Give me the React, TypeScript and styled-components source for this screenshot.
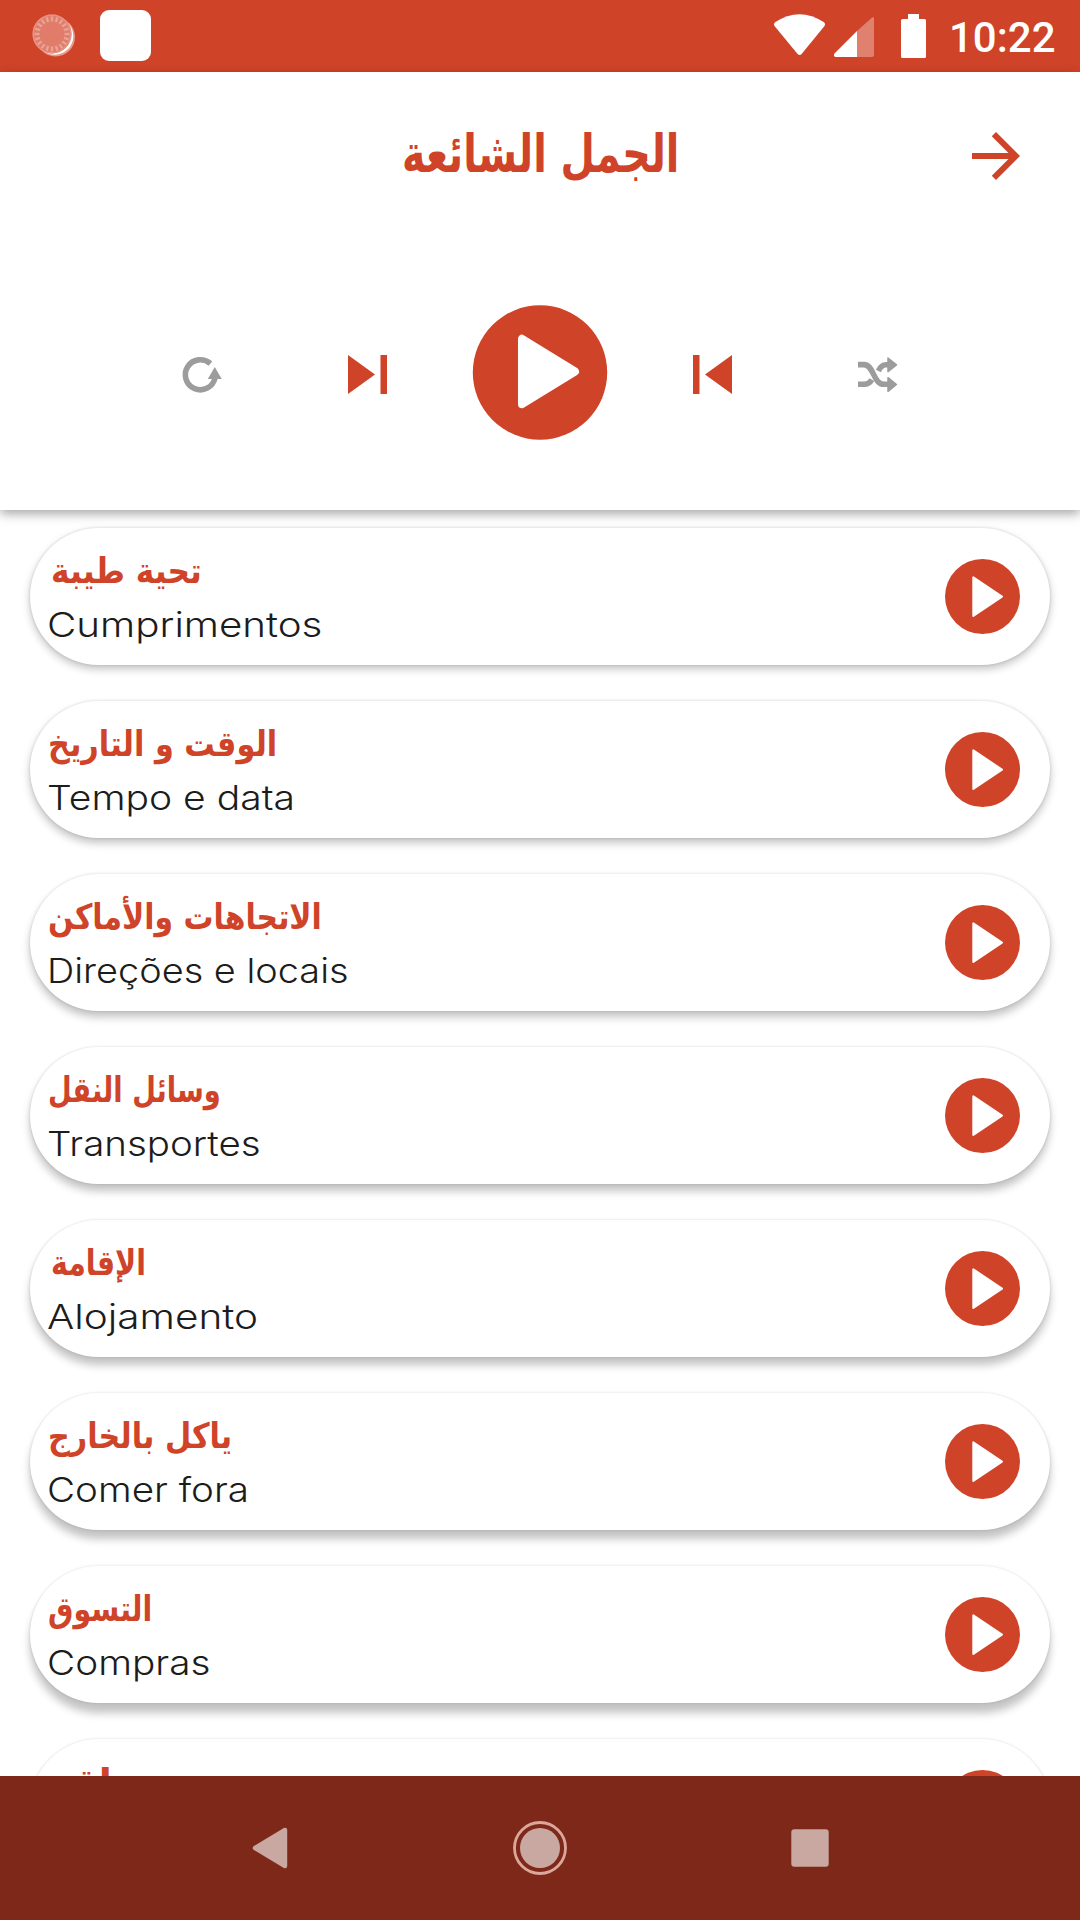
import React, { useLayoutEffect, useRef, useState } from 'react';
import styled, { createGlobalStyle } from 'styled-components';

const RED = '#cf4328';
const GREY = '#9c9c9c';

const GlobalStyle = createGlobalStyle`
  * { box-sizing: border-box; }
  html, body { margin: 0; padding: 0; background: #fff; }
`;

const Screen = styled.div`
  width: 1080px;
  height: 1920px;
  display: flex;
  flex-direction: column;
  overflow: hidden;
  background: #fff;
`;

const StatusBar = styled.div`
  flex: none;
  height: 72px;
  display: flex;
  justify-content: space-between;
  background: ${RED};
`;

const StatusGroup = styled.div`
  display: flex;
  align-items: center;
`;

const Clock = styled.span`
  width: 131px;
  padding-top: 4px;
  font: 500 42px/72px Roboto, sans-serif;
  color: #fff;
  white-space: nowrap;
`;

const Header = styled.header`
  flex: none;
  height: 438px;
  z-index: 1;
  background: #fff;
  box-shadow: 0 4px 10px rgba(0, 0, 0, 0.34);
`;

const TitleRow = styled.div`
  height: 168px;
  display: grid;
  grid-template-columns: 108px 1fr 48px;
  align-items: center;
  padding: 0 60px 0 0;
`;

const Title = styled.h1`
  margin: 0;
  padding-bottom: 5px;
  display: flex;
  justify-content: center;
  font: 700 53px/80px 'DejaVu Sans', sans-serif;
  color: ${RED};
`;

const Controls = styled.div`
  height: 270px;
  padding: 0 116px;
  display: grid;
  grid-template-columns: 168px 168px 176px 168px 168px;
  align-items: center;
  justify-items: center;
`;

const List = styled.main`
  flex: 1;
  min-height: 0;
  overflow: hidden;
  display: flex;
  flex-direction: column;
  gap: 36px;
  padding: 18px 30px 0;
`;

const Card = styled.article<{ $drop: number }>`
  flex: none;
  height: 137px;
  display: flex;
  align-items: center;
  justify-content: space-between;
  padding: 0 30px 0 17px;
  border-radius: 69px;
  background: #fff;
  box-shadow:
    0 ${(p) => p.$drop}px 8px rgba(0, 0, 0, 0.24),
    0 0 3px rgba(0, 0, 0, 0.14);
`;

const Labels = styled.div`
  display: flex;
  flex-direction: column;
  align-items: flex-start;
`;

const Arabic = styled.div<{ $inset?: number }>`
  height: 52px;
  padding-left: ${(p) => 1 + (p.$inset ?? 0)}px;
  font: 700 35px/52px 'DejaVu Sans', sans-serif;
  color: ${RED};
`;

const Latin = styled.div`
  height: 52px;
  padding-top: 2px;
  font: 300 34px/52px Inter, sans-serif;
  color: #1c1c1c;
`;

const FitBox = styled.span`
  display: block;
  white-space: nowrap;
`;

const FitInner = styled.span`
  display: inline-block;
  transform-origin: 0 50%;
`;

const NavBar = styled.nav`
  flex: none;
  height: 144px;
  z-index: 2;
  display: grid;
  grid-template-columns: repeat(3, 270px);
  justify-content: center;
  justify-items: center;
  align-items: center;
  background: #7e281a;
`;

/* Condenses or widens a line so that it takes exactly the given width. */
function Fit({ width, dir, children }: { width: number; dir: 'rtl' | 'ltr'; children: string }) {
  const ref = useRef<HTMLSpanElement>(null);
  const [scale, setScale] = useState(1);
  useLayoutEffect(() => {
    if (ref.current) setScale(width / ref.current.offsetWidth);
  }, [width]);
  return (
    <FitBox style={{ width }}>
      <FitInner ref={ref} dir={dir} style={{ transform: `scaleX(${scale})` }}>
        {children}
      </FitInner>
    </FitBox>
  );
}

const rays = Array.from({ length: 20 }, (_, i) => (i * Math.PI) / 10);

const SyncIcon = () => (
  <svg width="100" height="72" viewBox="0 0 100 72">
    <circle cx="55.5" cy="37" r="19.5" fill="#e89a8a" />
    <circle cx="54.5" cy="36" r="18.8" fill="#fff" />
    <circle cx="52" cy="34" r="19.5" fill="#e07c69" />
    <g stroke="#e9a296" strokeWidth="2.4">
      {rays.map((a) => (
        <line
          key={a}
          x1={52 + 12.5 * Math.cos(a)}
          y1={34 + 12.5 * Math.sin(a)}
          x2={52 + 17.5 * Math.cos(a)}
          y2={34 + 17.5 * Math.sin(a)}
        />
      ))}
    </g>
    <circle cx="52" cy="34" r="18.7" fill="none" stroke="#e59384" strokeWidth="1.6" />
  </svg>
);

const SquareIcon = () => (
  <svg width="52" height="72" viewBox="100 0 52 72">
    <rect x="100" y="10" width="51" height="51" rx="9" fill="#fff" />
  </svg>
);

const SystemIcons = () => (
  <svg width="180" height="72" viewBox="769 0 180 72" fill="#fff">
    <path d="M774.5 26 Q773 24 775 22.3 Q799.5 6 824 22.3 Q826 24 824.5 26 L801.6 54 Q799.6 56 797.6 54 Z" />
    <path d="M872 17.5 Q874 16 874 19 V55 Q874 57 872 57 H857 V31 Z" opacity="0.33" />
    <path d="M857 31 V57 H835.5 Q833 56.5 834.5 53.5 Z" />
    <path d="M908 14 H919 V19 H924.5 Q926 19 926 20.5 V56.5 Q926 58 924.5 58 H902.5 Q901 58 901 56.5 V20.5 Q901 19 902.5 19 H908 Z" />
  </svg>
);

const ArrowIcon = () => (
  <svg width="48" height="48" viewBox="4 4 16 16" fill={RED}>
    <path d="M12 4l-1.41 1.41L16.17 11H4v2h12.17l-5.58 5.59L12 20l8-8z" />
  </svg>
);

const RepeatIcon = () => (
  <svg width="44" height="44" viewBox="178 353 44 44">
    <path d="M210.4 363.6 A15 15 0 1 0 215 378" fill="none" stroke={GREY} strokeWidth="5.6" />
    <path d="M214.8 367 L221.7 379 H207.8 Z" fill={GREY} />
  </svg>
);

const NextIcon = () => (
  <svg width="40" height="40" viewBox="348 355 40 40" fill={RED}>
    <path d="M348 355 L375 374.5 L348 394 Z M380.5 355 H387 V394 H380.5 Z" />
  </svg>
);

const PrevIcon = () => (
  <svg width="40" height="40" viewBox="692 355 40 40" fill={RED}>
    <path d="M732 355 L705 374.5 L732 394 Z M693 355 H699.5 V394 H693 Z" />
  </svg>
);

const BigPlayIcon = () => (
  <svg width="136" height="140" viewBox="472 305 136 140">
    <circle cx="540" cy="372.5" r="67.2" fill={RED} />
    <path
      d="M522 338.8 V404.2 L575 371.5 Z"
      fill="#fff"
      stroke="#fff"
      strokeWidth="8"
      strokeLinejoin="round"
    />
  </svg>
);

const ShuffleIcon = () => (
  <svg width="44" height="44" viewBox="858 353 44 44">
    <g fill="none" stroke={GREY} strokeWidth="5.6">
      <path d="M858 364.6 H864 C874 364.6 873 384.3 884 384.3 H888" />
      <path d="M858 384.3 H864 C867.8 384.3 870 382.8 871.8 379.6" />
      <path d="M878.4 371 C880.2 367 882 364.8 886 364.8 H888" />
    </g>
    <path
      d="M888 358 L896.5 364.8 L888 371.6 Z M888 377.7 L896.5 384.5 L888 391.3 Z"
      fill={GREY}
      stroke={GREY}
      strokeWidth="1.5"
      strokeLinejoin="round"
    />
  </svg>
);

const PlayIcon = () => (
  <svg width="75" height="75" viewBox="0 0 75 75">
    <circle cx="37.5" cy="37.5" r="37.5" fill={RED} />
    <path
      d="M28.3 18.3 V57 L57 37.6 Z"
      fill="#fff"
      stroke="#fff"
      strokeWidth="2"
      strokeLinejoin="round"
    />
  </svg>
);

const navTint = '#c9a8a1';

const BackIcon = () => (
  <svg width="56" height="56" viewBox="242 1820 56 56">
    <path
      d="M285 1830 V1866 L255 1848 Z"
      fill={navTint}
      stroke={navTint}
      strokeWidth="4.4"
      strokeLinejoin="round"
    />
  </svg>
);

const HomeIcon = () => (
  <svg width="56" height="56" viewBox="-28 -28 56 56">
    <circle r="25.5" fill="none" stroke="#dba79c" strokeWidth="2.8" />
    <circle r="20" fill={navTint} />
  </svg>
);

const RecentsIcon = () => (
  <svg width="56" height="56" viewBox="782 1820 56 56">
    <rect x="791.3" y="1829.3" width="37.4" height="37.4" rx="3" fill={navTint} />
  </svg>
);

const phrases = [
  { ar: 'تحية طيبة', arW: 151, inset: 3, pt: 'Cumprimentos', ptW: 275 },
  { ar: 'الوقت و التاريخ', arW: 229, pt: 'Tempo e data', ptW: 248 },
  { ar: 'الاتجاهات والأماكن', arW: 274, pt: 'Direções e locais', ptW: 302 },
  { ar: 'وسائل النقل', arW: 173, pt: 'Transportes', ptW: 214 },
  { ar: 'الإقامة', arW: 95, inset: 3, pt: 'Alojamento', ptW: 211 },
  { ar: 'ياكل بالخارج', arW: 184, pt: 'Comer fora', ptW: 202 },
  { ar: 'التسوق', arW: 104, pt: 'Compras', ptW: 164 },
  { ar: 'واقع', arW: 88, pt: '', ptW: 0 },
];

export default function App() {
  return (
    <>
      <GlobalStyle />
      <Screen>
        <StatusBar>
          <StatusGroup>
            <SyncIcon />
            <SquareIcon />
          </StatusGroup>
          <StatusGroup>
            <SystemIcons />
            <Clock>10:22</Clock>
          </StatusGroup>
        </StatusBar>
        <Header>
          <TitleRow>
            <span />
            <Title>
              <Fit width={277} dir="rtl">الجمل الشائعة</Fit>
            </Title>
            <ArrowIcon />
          </TitleRow>
          <Controls>
            <RepeatIcon />
            <NextIcon />
            <BigPlayIcon />
            <PrevIcon />
            <ShuffleIcon />
          </Controls>
        </Header>
        <List>
          {phrases.map((p, i) => (
            <Card key={p.ar} $drop={4 + i}>
              <Labels>
                <Arabic $inset={p.inset}>
                  <Fit width={p.arW} dir="rtl">{p.ar}</Fit>
                </Arabic>
                <Latin>{p.pt && <Fit width={p.ptW} dir="ltr">{p.pt}</Fit>}</Latin>
              </Labels>
              <PlayIcon />
            </Card>
          ))}
        </List>
        <NavBar>
          <BackIcon />
          <HomeIcon />
          <RecentsIcon />
        </NavBar>
      </Screen>
    </>
  );
}
